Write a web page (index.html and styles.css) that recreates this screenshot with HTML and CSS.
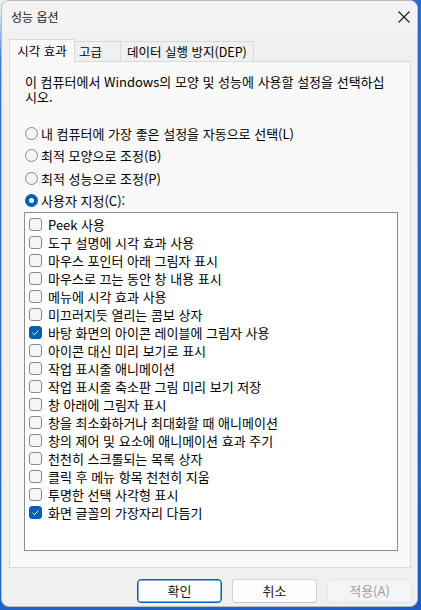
FILE: index.html
```html
<!DOCTYPE html>
<html lang="ko">
<head>
<meta charset="utf-8">
<title>성능 옵션</title>
<link rel="stylesheet" href="styles.css">
</head>
<body>
<div class="window">
  <div class="titlebar">
    <span class="title">성능 옵션</span>
    <svg class="close" width="12" height="12" viewBox="0 0 12 12"><path d="M0.5 0.5L11.5 11.5M11.5 0.5L0.5 11.5" stroke="#1b1b1b" stroke-width="1.1" fill="none"/></svg>
  </div>
  <div class="tabs">
    <div class="tab active">시각 효과</div>
    <div class="tab tab-adv">고급</div>
    <div class="tab tab-dep">데이터 실행 방지(DEP)</div>
  </div>
  <div class="panel">
    <p class="desc">이 컴퓨터에서 Windows의 모양 및 성능에 사용할 설정을 선택하십시오.</p>
    <div class="radios">
      <div class="radio"><span class="rb"></span>내 컴퓨터에 가장 좋은 설정을 자동으로 선택(L)</div>
      <div class="radio"><span class="rb"></span>최적 모양으로 조정(B)</div>
      <div class="radio"><span class="rb"></span>최적 성능으로 조정(P)</div>
      <div class="radio"><span class="rb on"></span>사용자 지정(C):</div>
    </div>
    <div class="list">
      <div class="item"><span class="cb"></span>Peek 사용</div>
      <div class="item"><span class="cb"></span>도구 설명에 시각 효과 사용</div>
      <div class="item"><span class="cb"></span>마우스 포인터 아래 그림자 표시</div>
      <div class="item"><span class="cb"></span>마우스로 끄는 동안 창 내용 표시</div>
      <div class="item"><span class="cb"></span>메뉴에 시각 효과 사용</div>
      <div class="item"><span class="cb"></span>미끄러지듯 열리는 콤보 상자</div>
      <div class="item"><span class="cb on"><svg width="13" height="13" viewBox="0 0 13 13"><path d="M3.6 6.9L5.5 8.7L9.4 4.5" stroke="#fff" stroke-width="1" fill="none"/></svg></span>바탕 화면의 아이콘 레이블에 그림자 사용</div>
      <div class="item"><span class="cb"></span>아이콘 대신 미리 보기로 표시</div>
      <div class="item"><span class="cb"></span>작업 표시줄 애니메이션</div>
      <div class="item"><span class="cb"></span>작업 표시줄 축소판 그림 미리 보기 저장</div>
      <div class="item"><span class="cb"></span>창 아래에 그림자 표시</div>
      <div class="item"><span class="cb"></span>창을 최소화하거나 최대화할 때 애니메이션</div>
      <div class="item"><span class="cb"></span>창의 제어 및 요소에 애니메이션 효과 주기</div>
      <div class="item"><span class="cb"></span>천천히 스크롤되는 목록 상자</div>
      <div class="item"><span class="cb"></span>클릭 후 메뉴 항목 천천히 지움</div>
      <div class="item"><span class="cb"></span>투명한 선택 사각형 표시</div>
      <div class="item"><span class="cb on"><svg width="13" height="13" viewBox="0 0 13 13"><path d="M3.6 6.9L5.5 8.7L9.4 4.5" stroke="#fff" stroke-width="1" fill="none"/></svg></span>화면 글꼴의 가장자리 다듬기</div>
    </div>
  </div>
  <div class="buttons">
    <div class="btn default">확인</div>
    <div class="btn">취소</div>
    <div class="btn disabled">적용(A)</div>
  </div>
</div>
</body>
</html>
```
FILE: styles.css
```css
html, body {
  margin: 0;
  padding: 0;
}
body {
  width: 421px;
  height: 610px;
  overflow: hidden;
  background: radial-gradient(circle at 0 0, #e9eef4 0, #e9eef4 10px, #3a78d8 60px, #1a5cc9 100%);
  font-family: "Noto Sans CJK KR", "Noto Sans", sans-serif;
  font-size: 13px;
  color: #000;
}
.window {
  box-sizing: border-box;
  width: 417px;
  height: 607px;
  margin-left: 1px;
  background: #f0f0f0;
  border: 1px solid #bdbdbd;
  border-radius: 8px;
  overflow: hidden;
  display: flex;
  flex-direction: column;
}
.titlebar {
  height: 30px;
  background: #f3f3f3;
  display: flex;
  align-items: center;
  justify-content: space-between;
  padding: 0 7px 0 9px;
  flex: none;
}
.title {
  font-size: 12px;
  line-height: 15px;
  color: #1a1a1a;
  margin-top: 1px;
}
.close {
  display: block;
  margin-top: 1px;
}
.tabs {
  display: flex;
  align-items: flex-end;
  height: 22px;
  margin: 8px 0 0 7px;
  position: relative;
  z-index: 1;
  flex: none;
  font-size: 12.5px;
}
.tab {
  box-sizing: border-box;
  height: 20px;
  line-height: 19px;
  border: 1px solid #d9d9d9;
  border-bottom: none;
  border-left: none;
  background: #f0f0f0;
  white-space: nowrap;
}
.tab.active {
  width: 66px;
  height: 23px;
  margin-bottom: -1px;
  line-height: 21px;
  border-left: 1px solid #d9d9d9;
  background: #f9f9f9;
  text-align: center;
  padding-bottom: 1px;
}
.tab-adv {
  width: 46px;
  padding-left: 4px;
}
.tab-dep {
  width: 133px;
  padding-left: 6px;
}
.panel {
  box-sizing: border-box;
  width: 402px;
  height: 507px;
  margin-left: 7px;
  background: #f9f9f9;
  border: 1px solid #d9d9d9;
  padding: 12px 0 0 14px;
  flex: none;
}
.desc {
  margin: 0 0 0 1px;
  width: 364px;
  line-height: 15px;
}
.radios {
  margin-top: 18px;
}
.radio {
  height: 22.5px;
  display: flex;
  align-items: center;
  white-space: nowrap;
}
.rb {
  box-sizing: border-box;
  width: 13px;
  height: 13px;
  border-radius: 50%;
  border: 1px solid #888;
  background: #f5f5f5;
  margin: 0 3px 0 1px;
  flex: none;
}
.rb.on {
  border: 4px solid #005fb8;
  background: #fff;
}
.list {
  box-sizing: border-box;
  width: 374px;
  height: 339px;
  background: #fff;
  border: 1px solid #8c8c8c;
  padding: 2px 0 0 4px;
}
.item {
  height: 18px;
  display: flex;
  align-items: center;
  white-space: nowrap;
}
.cb {
  box-sizing: border-box;
  width: 13px;
  height: 13px;
  border: 1px solid #8a8a8a;
  border-radius: 3px;
  background: #f5f5f5;
  margin-right: 6px;
  flex: none;
  position: relative;
}
.cb.on {
  background: #005fb8;
  border-color: #005fb8;
}
.cb svg {
  position: absolute;
  left: -1px;
  top: -1px;
}
.buttons {
  display: flex;
  justify-content: flex-end;
  gap: 10px;
  margin: 11px 5px 0 0;
  flex: none;
}
.btn {
  box-sizing: border-box;
  width: 85px;
  height: 24px;
  line-height: 22px;
  text-align: center;
  background: #fdfdfd;
  border: 1px solid #d3d3d3;
  border-bottom-color: #c2c2c2;
  border-radius: 4px;
  color: #1a1a1a;
}
.btn.default {
  border: 1px solid #005fb8;
  box-shadow: inset 0 0 0 0.5px #005fb8;
}
.btn.disabled {
  background: #f5f5f5;
  border-color: #e6e6e6;
  color: #a0a0a0;
}
```
